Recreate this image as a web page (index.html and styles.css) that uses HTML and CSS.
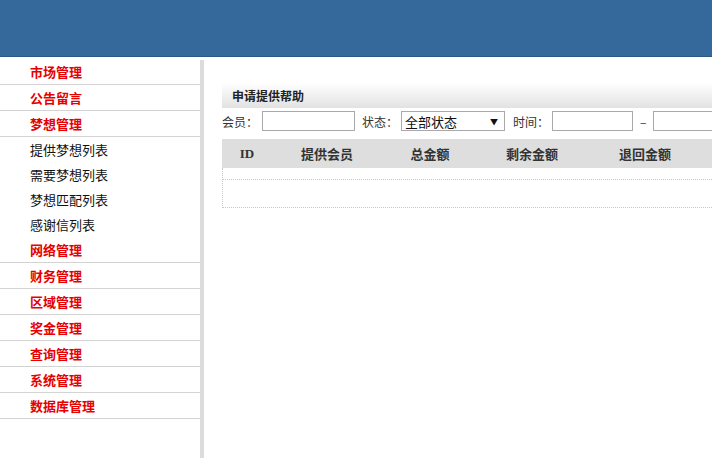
FILE: index.html
```html
<!DOCTYPE html>
<html lang="zh-CN">
<head>
<meta charset="utf-8">
<title>申请提供帮助</title>
<link rel="stylesheet" href="styles.css">
</head>
<body>
<div class="topbar"></div>
<div class="main">
  <div class="sidebar">
    <div class="nav-head">市场管理</div>
    <div class="nav-head">公告留言</div>
    <div class="nav-head">梦想管理</div>
    <div class="nav-item">提供梦想列表</div>
    <div class="nav-item">需要梦想列表</div>
    <div class="nav-item">梦想匹配列表</div>
    <div class="nav-item">感谢信列表</div>
    <div class="nav-head">网络管理</div>
    <div class="nav-head">财务管理</div>
    <div class="nav-head">区域管理</div>
    <div class="nav-head">奖金管理</div>
    <div class="nav-head">查询管理</div>
    <div class="nav-head">系统管理</div>
    <div class="nav-head">数据库管理</div>
  </div>
  <div class="divider"></div>
  <div class="content">
    <div class="title-bar">申请提供帮助</div>
    <div class="filters">
      <span class="label">会员：</span>
      <span class="input w-member"></span>
      <span class="label tight">状态：</span>
      <span class="select"><span>全部状态</span><span class="arrow">▼</span></span>
      <span class="label tight">时间：</span>
      <span class="input w-time"></span>
      <span class="dash">–</span>
      <span class="input w-time2"></span>
    </div>
    <div class="table">
      <div class="thead">
        <div class="th c1 serif">ID</div>
        <div class="th c2">提供会员</div>
        <div class="th c3">总金额</div>
        <div class="th c4">剩余金额</div>
        <div class="th c5">退回金额</div>
      </div>
      <div class="tbody">
        <div class="row r1"></div>
        <div class="row r2"></div>
      </div>
    </div>
  </div>
</div>
</body>
</html>
```

FILE: styles.css
```css
html, body {
  margin: 0;
  padding: 0;
  background: #fff;
}
body {
  font-family: "Noto Sans CJK SC", "DejaVu Sans", sans-serif;
  font-size: 12px;
  color: #222;
  width: 712px;
  height: 458px;
  overflow: hidden;
}
.topbar {
  height: 56px;
  background: #35689b;
  border-bottom: 1px solid #2b5885;
}
.main {
  display: flex;
  height: 401px;
}
.sidebar {
  width: 200px;
  padding-top: 2px;
  flex: none;
}
.nav-head {
  height: 25px;
  line-height: 25px;
  padding-left: 30px;
  font-size: 13px;
  font-weight: bold;
  color: #e60000;
  border-bottom: 1px solid #d3d3d3;
}
.nav-item {
  height: 25px;
  line-height: 25px;
  padding-left: 30px;
  font-size: 13px;
  color: #111;
}
.divider {
  width: 4px;
  margin-top: 3px;
  background: #dcdcdc;
  flex: none;
}
.content {
  flex: 1;
  padding-left: 18px;
  padding-top: 26px;
  overflow: hidden;
}
.title-bar {
  height: 25px;
  line-height: 25px;
  padding-left: 10px;
  font-weight: bold;
  color: #222;
  background: linear-gradient(#ffffff, #e2e2e2);
}
.filters {
  display: flex;
  align-items: center;
  height: 22px;
  margin-top: 2px;
  white-space: nowrap;
}
.label {
  color: #333;
  margin-right: 4px;
  flex: none;
}
.label.tight {
  margin-right: 3px;
}
.input {
  display: inline-block;
  height: 18px;
  border: 1px solid #a9a9a9;
  background: #fff;
  flex: none;
}
.w-member { width: 91px; margin-right: 7px; }
.w-time { width: 79px; margin-right: 7px; }
.w-time2 { width: 80px; }
.dash { margin-right: 7px; color: #333; flex: none; }
.select {
  display: flex;
  align-items: center;
  justify-content: space-between;
  width: 93px;
  height: 18px;
  padding: 0 6px 0 3px;
  border: 1px solid #a9a9a9;
  margin-right: 8px;
  flex: none;
  color: #111;
  font-size: 13px;
}
.arrow {
  font-size: 8px;
  color: #111;
}
.table {
  margin-top: 7px;
  width: 500px;
}
.thead {
  display: flex;
  height: 29px;
  background: #dedede;
}
.th {
  line-height: 29px;
  text-align: center;
  font-weight: bold;
  font-size: 13px;
  color: #333;
  flex: none;
}
.serif {
  font-family: "Liberation Serif", serif;
  font-size: 13px;
}
.c1 { width: 50px; }
.c2 { width: 110px; }
.c3 { width: 96px; }
.c4 { width: 108px; }
.c5 { width: 118px; }
.tbody {
  border-left: 1px dotted #c8c8c8;
}
.row {
  border-bottom: 1px dotted #c8c8c8;
}
.r1 { height: 11px; }
.r2 { height: 27px; }
```
